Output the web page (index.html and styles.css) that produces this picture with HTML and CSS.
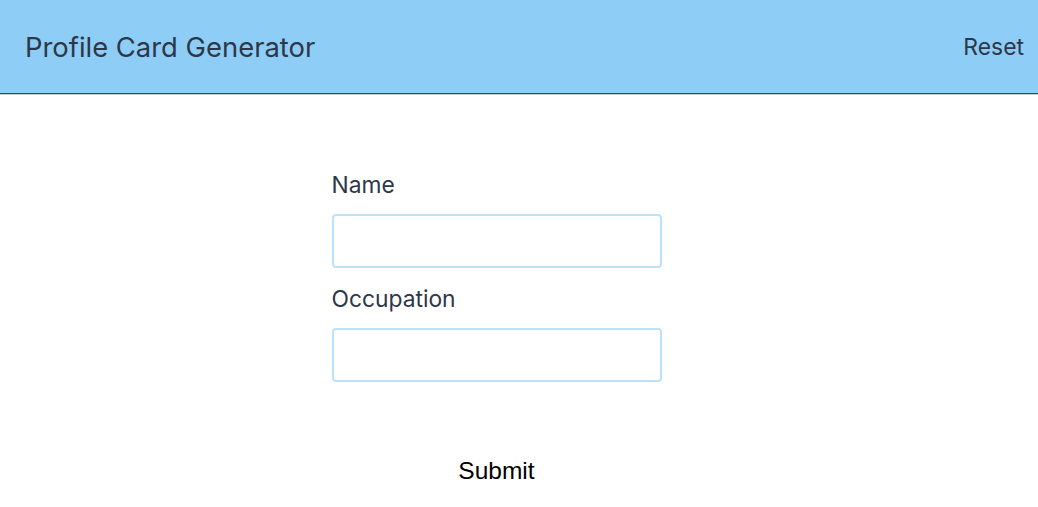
FILE: index.html
```html
<!DOCTYPE html>
<html lang="en">
<head>
<meta charset="utf-8">
<title>Profile Card Generator</title>
<link rel="stylesheet" href="styles.css">
</head>
<body>
<header class="topbar">
  <h1 class="title">Profile Card Generator</h1>
  <button class="reset" type="button">Reset</button>
</header>
<main class="page">
  <form class="form">
    <label class="label" for="name">Name</label>
    <input class="field" id="name" type="text">
    <label class="label" for="occupation">Occupation</label>
    <input class="field" id="occupation" type="text">
    <div class="actions">
      <button class="submit" type="submit">Submit</button>
    </div>
  </form>
</main>
</body>
</html>
```
FILE: styles.css
```css
* { box-sizing: border-box; }
html, body { margin: 0; padding: 0; background: #fff; }
body { font-family: Inter, "Noto Sans", sans-serif; color: #2d3748; }

.topbar {
  height: 94px;
  background: #8ecdf6;
  border-bottom: 1px solid #3d4656;
  box-shadow: 0 1px 0 #c9ccd1;
  display: flex;
  align-items: center;
  justify-content: space-between;
  padding: 0 14px 0 25px;
}
.title {
  margin: 0;
  font-size: 27.4px;
  font-weight: 400;
  color: #2d3748;
}
.reset {
  background: none;
  border: 0;
  padding: 0;
  font-family: inherit;
  font-size: 22.9px;
  color: #2d3748;
}

.page {
  width: 993px;
  padding-top: 76px;
}
.form {
  width: 330px;
  margin: 0 auto;
  display: flex;
  flex-direction: column;
}
.label {
  font-size: 22.8px;
  line-height: 30px;
  margin-bottom: 14px;
}
.field {
  height: 54px;
  border: 2px solid #bce2fa;
  border-radius: 4px;
  margin-bottom: 16px;
  font-size: 20px;
  outline: none;
}
.actions {
  display: flex;
  justify-content: center;
  padding-top: 59px;
}
.submit {
  background: none;
  border: 0;
  padding: 0;
  font-family: "Liberation Sans", Arial, sans-serif;
  font-size: 24.5px;
  color: #000;
}
```
